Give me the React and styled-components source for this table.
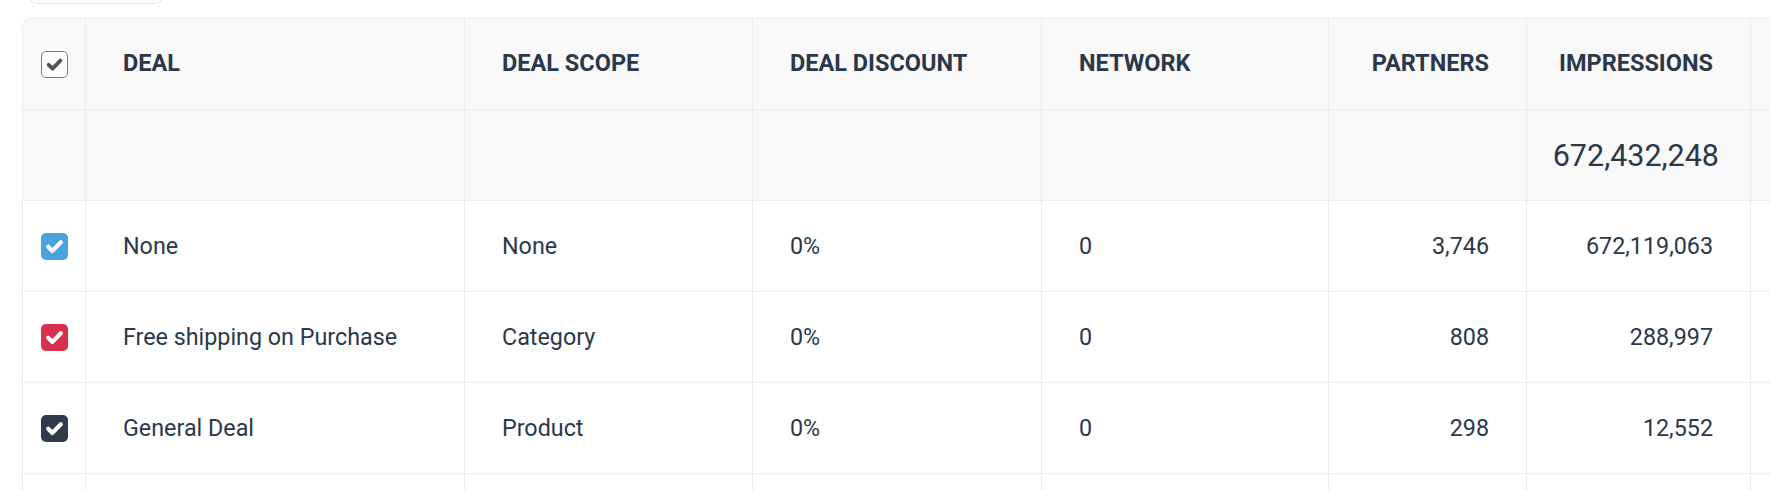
import styled, { createGlobalStyle } from 'styled-components';

const GlobalStyle = createGlobalStyle`
  html, body {
    margin: 0;
    padding: 0;
    background: #ffffff;
    overflow: hidden;
  }
  body {
    font-family: Roboto, "Liberation Sans", sans-serif;
    color: #2c3a4b;
  }
`;

const Page = styled.div`
  padding-left: 22px;
  height: 490px;
  overflow: hidden;
`;

const Toolbar = styled.div`
  height: 18px;
  padding-left: 6px;
  overflow: hidden;
`;

const ToolButton = styled.div`
  width: 134px;
  height: 40px;
  margin-top: -38px;
  border: 1px solid #e6e6e6;
  border-radius: 9px;
  background: #fff;
`;

const Table = styled.table`
  border-collapse: separate;
  border-spacing: 0;
  table-layout: fixed;
  width: 1928px;
  border-top: 1px solid #ececec;
  border-left: 1px solid #ececec;
  border-top-left-radius: 10px;
  overflow: hidden;
`;

const Row = styled.tr`
  height: 91px;
  background: ${(p) => (p.$shaded ? '#f9f9f9' : '#ffffff')};
`;

const HeadCell = styled.th`
  padding: 0 37px 3px;
  padding-left: ${(p) => (p.$align === 'right' ? '12px' : '37px')};
  border-right: 1px solid #ececec;
  border-bottom: 1px solid #ececec;
  font-size: 23.5px;
  font-weight: 700;
  text-transform: uppercase;
  text-align: ${(p) => p.$align || 'left'};
  vertical-align: middle;
  color: #2a384a;
  white-space: nowrap;
`;

const Cell = styled.td`
  padding: 0 37px;
  border-right: 1px solid #ececec;
  border-bottom: 1px solid #ececec;
  font-size: 23.3px;
  text-align: ${(p) => p.$align || 'left'};
  vertical-align: middle;
  color: #2a384a;
  white-space: nowrap;
`;

const TotalCell = styled(Cell)`
  font-size: 30.5px;
  padding-left: 10px;
  padding-right: 31px;
`;

const BoxCell = styled.td`
  padding: 0;
  border-right: 1px solid #ececec;
  border-bottom: 1px solid #ececec;
  text-align: center;
  vertical-align: middle;
`;

const Box = styled.span`
  display: inline-flex;
  align-items: center;
  justify-content: center;
  box-sizing: border-box;
  width: 27px;
  height: 27px;
  border-radius: 5px;
  background: ${(p) => p.$color || '#fff'};
  border: ${(p) => (p.$color ? 'none' : '1.5px solid #7a7a7a')};
  color: ${(p) => (p.$color ? '#fff' : '#555')};
  vertical-align: middle;
`;

const Check = ({ color }) => (
  <Box $color={color}>
    <svg width="27" height="27" viewBox="0 0 27 27">
      <polyline
        points="7.2,13.8 11.4,17.9 19.8,9.3"
        fill="none"
        stroke="currentColor"
        strokeWidth="4.2"
        strokeLinecap="round"
        strokeLinejoin="round"
      />
    </svg>
  </Box>
);

const widths = [63, 379, 288, 289, 287, 198, 224, 200];

const rows = [
  { color: '#4aa2de', deal: 'None', scope: 'None', discount: '0%', network: '0', partners: '3,746', impressions: '672,119,063' },
  { color: '#d7304c', deal: 'Free shipping on Purchase', scope: 'Category', discount: '0%', network: '0', partners: '808', impressions: '288,997' },
  { color: '#2f3b4d', deal: 'General Deal', scope: 'Product', discount: '0%', network: '0', partners: '298', impressions: '12,552' },
];

export default function App() {
  return (
    <Page>
      <GlobalStyle />
      <Toolbar>
        <ToolButton />
      </Toolbar>
      <Table>
        <colgroup>
          {widths.map((w, i) => (
            <col key={i} style={{ width: w }} />
          ))}
        </colgroup>
        <thead>
          <Row $shaded>
            <BoxCell>
              <Check />
            </BoxCell>
            <HeadCell>Deal</HeadCell>
            <HeadCell>Deal Scope</HeadCell>
            <HeadCell>Deal Discount</HeadCell>
            <HeadCell>Network</HeadCell>
            <HeadCell $align="right">Partners</HeadCell>
            <HeadCell $align="right">Impressions</HeadCell>
            <HeadCell />
          </Row>
          <Row $shaded>
            <BoxCell />
            <Cell />
            <Cell />
            <Cell />
            <Cell />
            <Cell />
            <TotalCell $align="right">672,432,248</TotalCell>
            <Cell />
          </Row>
        </thead>
        <tbody>
          {rows.map((r) => (
            <Row key={r.deal}>
              <BoxCell>
                <Check color={r.color} />
              </BoxCell>
              <Cell>{r.deal}</Cell>
              <Cell>{r.scope}</Cell>
              <Cell>{r.discount}</Cell>
              <Cell>{r.network}</Cell>
              <Cell $align="right">{r.partners}</Cell>
              <Cell $align="right">{r.impressions}</Cell>
              <Cell />
            </Row>
          ))}
          <Row>
            <BoxCell />
            <Cell />
            <Cell />
            <Cell />
            <Cell />
            <Cell />
            <Cell />
            <Cell />
          </Row>
        </tbody>
      </Table>
    </Page>
  );
}
